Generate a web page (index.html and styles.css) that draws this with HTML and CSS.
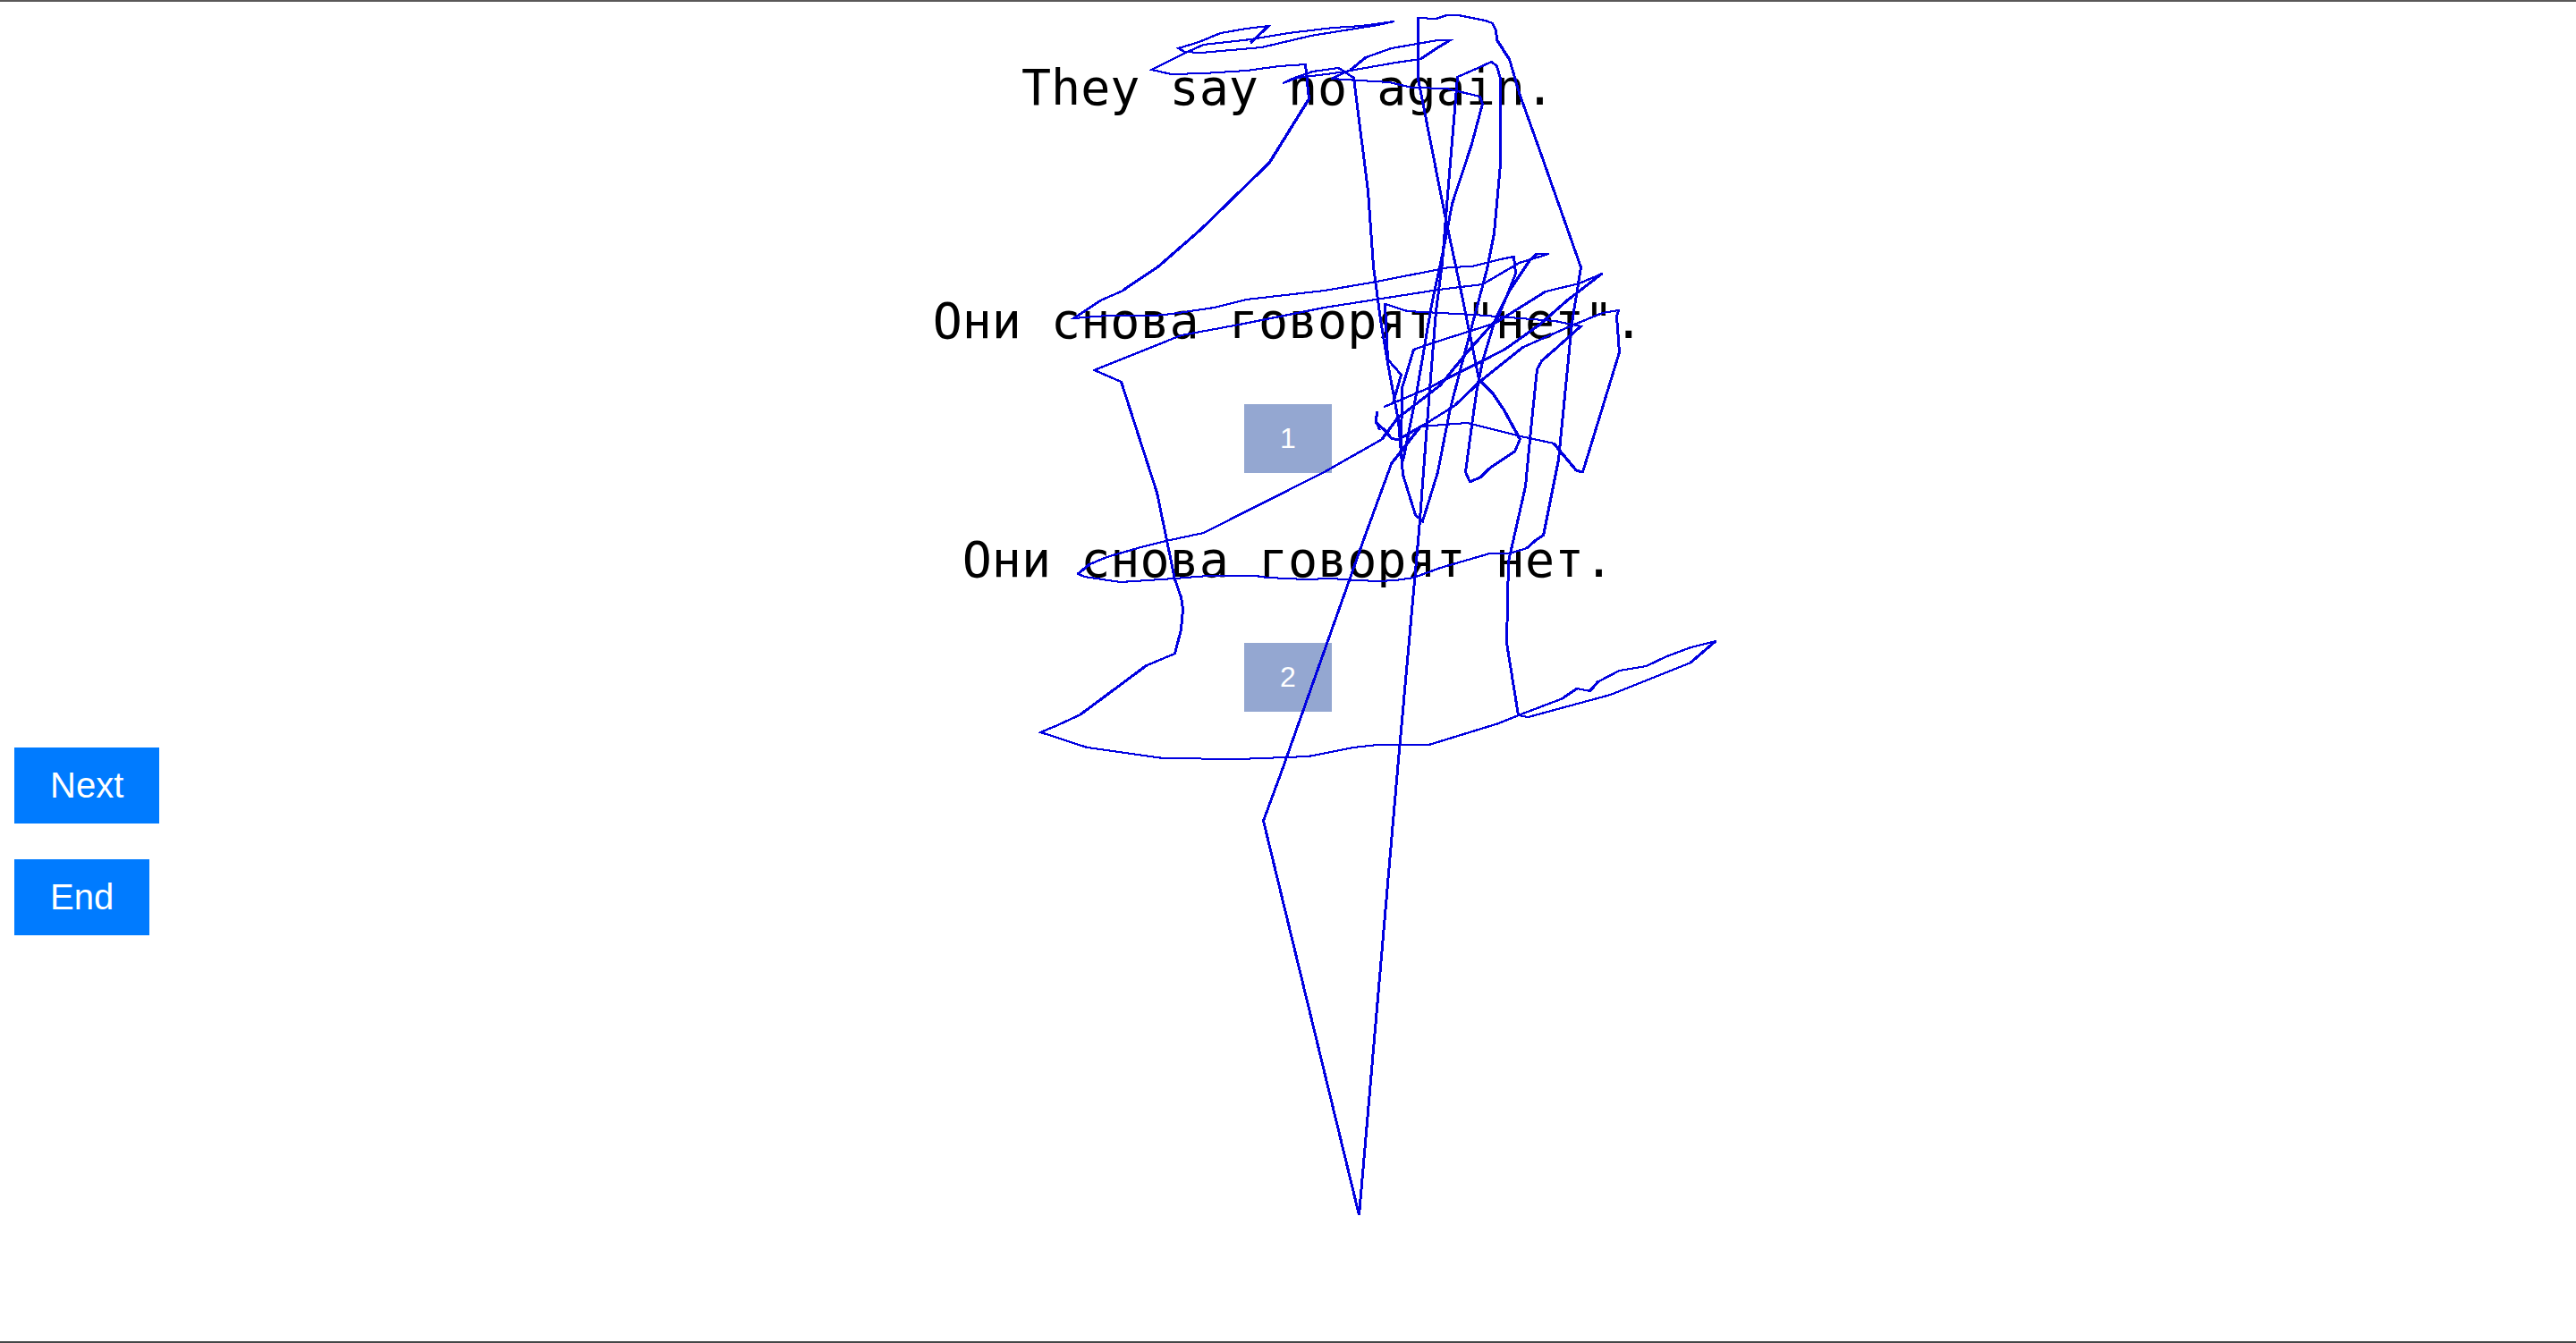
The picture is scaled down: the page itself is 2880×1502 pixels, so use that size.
FILE: index.html
```html
<!DOCTYPE html>
<html lang="ru">
<head>
<meta charset="utf-8">
<title>Translations</title>
<link rel="stylesheet" href="styles.css">
</head>
<body>
<main class="page">
  <p class="phrase source" lang="en">They say no again.</p>
  <section class="option">
    <p class="phrase">Они снова говорят "нет".</p>
    <button class="choice" type="button">1</button>
  </section>
  <section class="option">
    <p class="phrase">Они снова говорят нет.</p>
    <button class="choice" type="button">2</button>
  </section>
  <nav class="actions">
    <button class="action" type="button">Next</button>
    <button class="action" type="button">End</button>
  </nav>
  <svg class="trail" viewBox="0 0 2880 1502" preserveAspectRatio="xMidYMin meet" aria-hidden="true">
    <g id="pen">
      <path d="M1398 47L1418 28L1393 31L1364 36L1340 46L1317 53L1324 57L1342 58L1410 52L1465 39L1490 35L1540 27L1558 23L1522 28L1490 30L1440 36L1398 43L1345 49L1325 58L1287 77L1309 82L1345 81L1393 78L1430 73L1459 71L1463 110L1419 181L1342 256L1295 297L1255 324L1230 335L1200 355L1237 352L1290 352L1310 350L1357 343L1393 334L1480 324L1533 315L1620 298L1645 297L1677 289L1692 286L1694 305L1674 355L1640 393L1610 430L1562 467L1545 490L1480 527L1345 595L1303 604L1275 611L1237 622L1218 630L1205 641L1212 644L1252 650L1313 646L1350 643L1403 643L1417 645L1459 647L1487 646L1517 648L1540 649L1560 648L1580 645L1610 634L1665 618L1687 618L1707 612L1717 603L1725 598L1742 513L1757 360L1767 298L1723 173L1698 103L1687 65L1673 43L1672 33L1668 25L1660 22L1630 16L1617 16L1605 20L1585 19L1585 87L1615 240L1632 320L1653 423L1668 438L1681 457L1699 490L1693 504L1665 523L1655 533L1643 538L1638 527L1647 460L1651 433L1657 403L1670 360L1688 323L1710 290L1718 283L1731 283L1698 293L1657 317L1608 323L1480 343L1385 362L1320 374L1223 413L1253 426L1293 550L1313 647L1320 667L1322 680L1320 703L1313 730L1282 743L1208 798L1182 810L1163 818L1215 835L1300 847L1384 848L1462 845L1513 835L1540 832L1597 832L1675 808L1697 799L1747 780L1763 769L1777 772L1787 761L1810 749L1840 744L1863 733L1890 723L1918 716L1890 740L1800 776L1708 801L1697 799L1684 718L1686 627L1705 543L1712 470L1718 412L1723 403L1738 390L1767 364L1738 358L1647 351L1573 347L1548 339L1551 401L1566 418L1557 450L1547 454L1599 432L1682 390L1720 363L1752 335L1791 305L1765 316L1728 325L1672 360L1647 368L1603 382L1580 390L1567 433L1566 505"/>
      <path d="M1542 480L1538 470L1539 459L1538 471L1550 482L1555 489L1563 491L1590 475L1627 452L1653 427L1703 387L1757 363L1791 349L1809 346L1807 353L1810 393L1769 527L1762 525L1737 495L1700 487L1640 472L1588 476L1555 518L1525 600L1433 860L1412 917L1519 1358L1562 860L1586 593L1597 447L1605 347L1612 293L1618 217L1629 85L1652 75L1667 68L1673 73L1677 87L1677 183L1670 260L1662 300L1632 413L1620 460L1607 527L1590 582L1582 575L1568 530L1563 470L1551 405L1543 357L1535 297L1529 213L1513 86L1496 75L1467 79L1447 86L1434 92L1450 86L1490 81L1503 79L1560 69L1588 65L1603 55L1621 44L1607 44L1555 53L1527 63L1510 77L1488 87L1503 88L1553 91L1578 97L1617 98L1654 107L1657 115L1645 160L1623 227L1615 270L1600 340L1583 440L1568 515"/>
    </g>
    <use href="#pen" x="1"/>
    <path class="heavy" d="M1398 47L1418 28M1463 110L1419 181L1342 256L1295 297L1255 324M1674 355L1640 393L1610 430L1562 467L1545 490M1218 630L1205 641M1707 612L1717 603L1725 598M1653 423L1668 438L1681 457L1699 490M1693 504L1665 523L1655 533L1643 538M1670 360L1688 323L1710 290L1718 283M1282 743L1208 798M1747 780L1763 769M1777 772L1787 761M1918 716L1890 740M1723 403L1738 390L1767 364M1599 432L1682 390L1720 363L1752 335L1791 305M1728 325L1672 360M1538 471L1550 482L1555 489L1563 491L1590 475M1627 452L1653 427L1703 387M1769 527L1762 525L1737 495M1588 476L1555 518M1588 65L1603 55L1621 44M1527 63L1510 77M1673 43L1687 65"/>
  </svg>
</main>
</body>
</html>
```
FILE: styles.css
```css
* {
  box-sizing: border-box;
}

body {
  margin: 0;
  background: #fff;
}

.page {
  position: relative;
  display: flex;
  flex-direction: column;
  min-height: 100vh;
  padding: 61px 16px 16px;
  border-top: 2px solid #5a5858;
  border-bottom: 2px solid #444848;
}

.phrase {
  margin: 0;
  color: #000;
  font-family: Consolas, "DejaVu Sans Mono", monospace;
  font-size: 55px;
  line-height: 70px;
  text-align: center;
}

.source {
  margin-bottom: 191px;
}

.option {
  display: flex;
  flex-direction: column;
  align-items: center;
  gap: 58px;
}

.option + .option {
  margin-top: 62px;
}

button {
  padding: 20px 40px;
  border: 0;
  color: #fff;
  font-family: "Liberation Sans", Arial, sans-serif;
}

.choice {
  background: #94a7d1;
  font-size: 32px;
  line-height: 37px;
}

.actions {
  display: flex;
  flex-direction: column;
  align-items: flex-start;
  gap: 40px;
  margin-top: 40px;
}

.action {
  background: #007bff;
  font-size: 40px;
  line-height: 45px;
}

/* Pointer trail drawn over the page */
.trail {
  position: absolute;
  top: -1px;
  left: 0;
  width: 100%;
  height: auto;
  pointer-events: none;
  fill: none;
  stroke: #0000e0;
  stroke-width: 2px;
  shape-rendering: crispEdges;
}

.heavy {
  stroke-width: 3px;
}
```
